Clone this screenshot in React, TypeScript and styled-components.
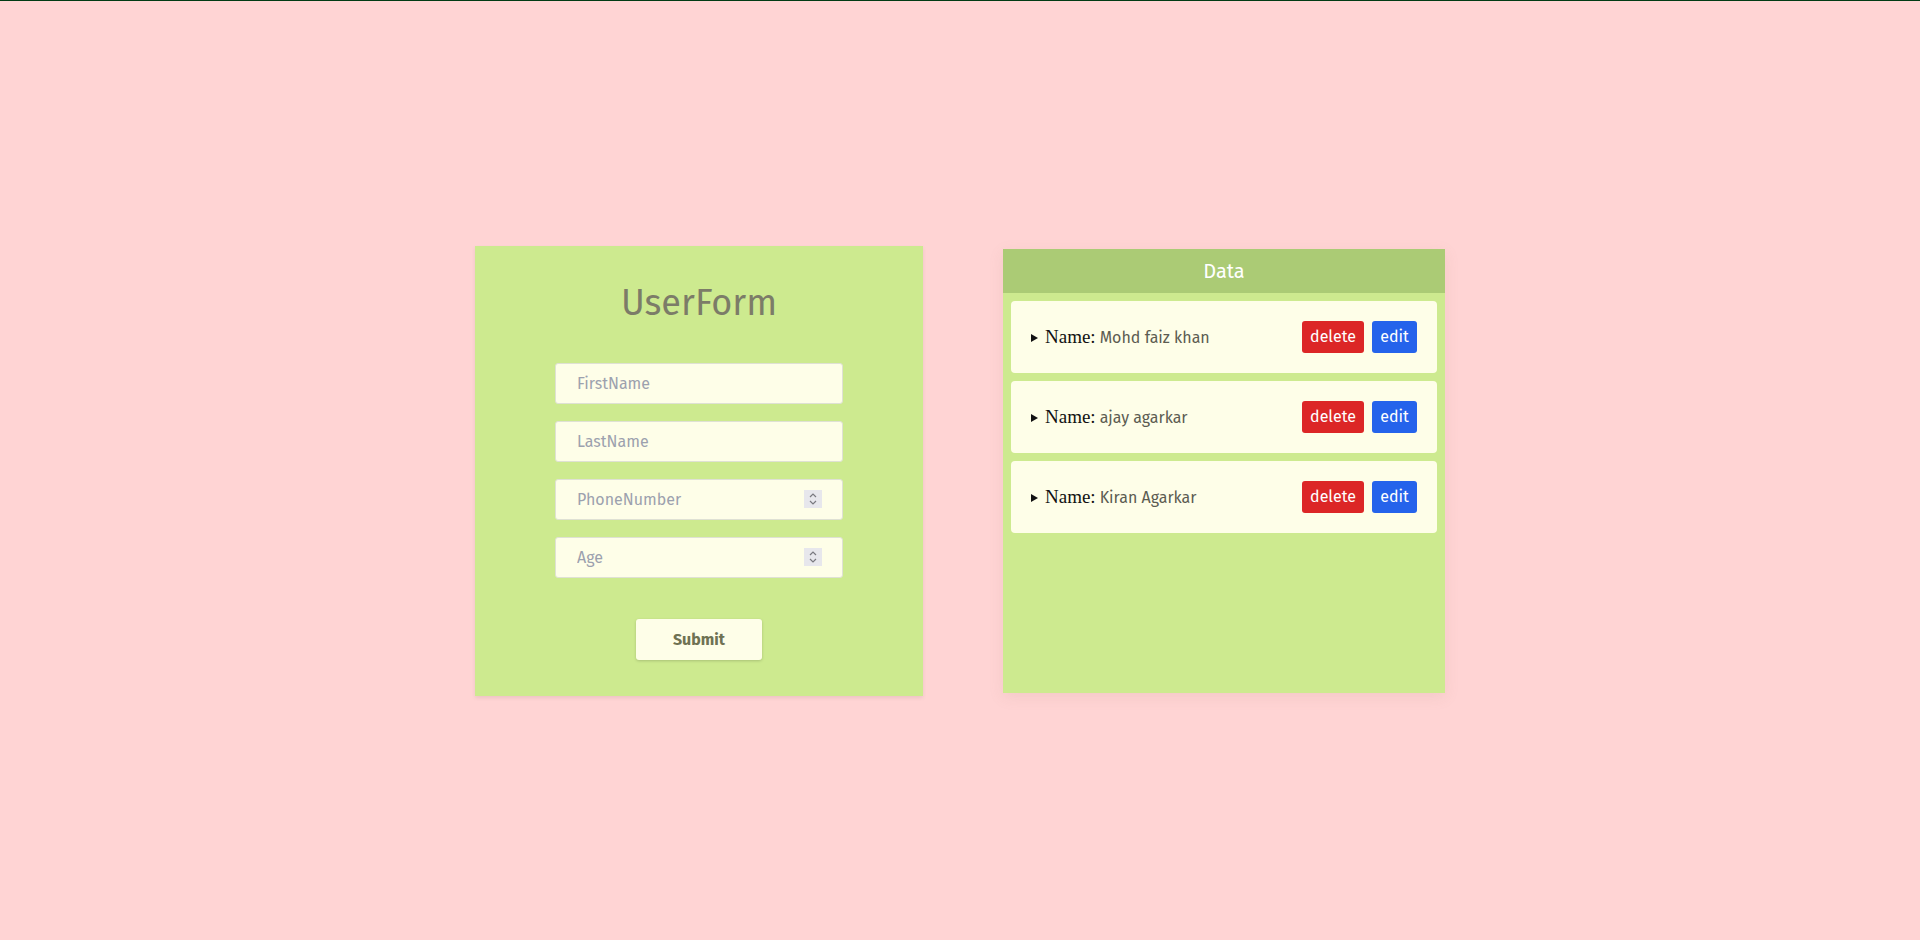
import React from "react";
import styled, { createGlobalStyle } from "styled-components";

const GlobalStyle = createGlobalStyle`
  * { box-sizing: border-box; }
  html, body { margin: 0; padding: 0; }
  body {
    background: #ffd4d4;
    border-top: 1px solid #013a14;
    font-family: "Fira Sans", Roboto, "Noto Sans", sans-serif;
  }
`;

const Page = styled.main`
  min-height: 939px;
  display: flex;
  align-items: center;
  justify-content: center;
  gap: 80px;
`;

const FormCard = styled.form`
  width: 448px;
  height: 450px;
  background: #cdea8f;
  box-shadow: 0 2px 4px rgba(0, 0, 0, 0.08);
  display: flex;
  flex-direction: column;
  align-items: center;
  padding-top: 35px;
`;

const Title = styled.h1`
  margin: 0 0 38px;
  font-size: 36px;
  line-height: 44px;
  font-weight: 400;
  color: #7c7c68;
`;

const Fields = styled.div`
  display: flex;
  flex-direction: column;
  gap: 17px;
  width: 288px;
`;

const FieldBox = styled.label`
  display: flex;
  align-items: center;
  height: 41px;
  padding: 0 20px 0 21px;
  background: #fefee8;
  border: 1px solid #dfe1d4;
  border-radius: 3px;
`;

const Input = styled.input`
  flex: 1;
  min-width: 0;
  border: none;
  outline: none;
  background: transparent;
  font-family: inherit;
  font-size: 16px;
  color: #444;
  padding: 0;
  &::placeholder { color: #9ca1ae; }
  &::-webkit-inner-spin-button,
  &::-webkit-outer-spin-button { -webkit-appearance: none; margin: 0; }
  -moz-appearance: textfield;
`;

const Spinner = styled.span`
  width: 18px;
  height: 18px;
  background: #e7e7ec;
  display: flex;
  align-items: center;
  justify-content: center;
`;

const SubmitButton = styled.button`
  margin-top: 41px;
  width: 126px;
  height: 41px;
  border: none;
  border-radius: 3px;
  background: #fefee8;
  box-shadow: 0 1px 3px rgba(0, 0, 0, 0.18);
  font-family: inherit;
  font-size: 16px;
  font-weight: 700;
  color: #6f7253;
  cursor: pointer;
`;

const DataCard = styled.section`
  width: 442px;
  height: 444px;
  background: #cdea8f;
  box-shadow: 0 4px 14px rgba(160, 120, 110, 0.12);
  display: flex;
  flex-direction: column;
`;

const DataHeader = styled.h2`
  margin: 0;
  height: 44px;
  background: #abcb75;
  color: #ffffff;
  font-size: 20px;
  font-weight: 400;
  line-height: 44px;
  text-align: center;
`;

const List = styled.div`
  display: flex;
  flex-direction: column;
  gap: 8px;
  padding: 8px;
`;

const Row = styled.div`
  height: 72px;
  background: #fefee8;
  border-radius: 4px;
  display: flex;
  align-items: center;
  justify-content: space-between;
  padding: 0 20px;
`;

const Details = styled.details`
  font-family: "Liberation Serif", "Times New Roman", serif;
  font-size: 19px;
  color: #111;
`;

const Summary = styled.summary`
  cursor: pointer;
  list-style: none;
  display: flex;
  align-items: baseline;
  &::-webkit-details-marker { display: none; }
  &::before {
    content: "";
    display: inline-block;
    width: 0;
    height: 0;
    border-top: 4px solid transparent;
    border-bottom: 4px solid transparent;
    border-left: 7px solid #111;
    margin: 0 7px 0 0;
    align-self: center;
    transform: translateY(1px);
  }
`;

const Label = styled.span`
  margin-right: 4px;
`;

const NameValue = styled.span`
  font-family: "Fira Sans", Roboto, "Noto Sans", sans-serif;
  font-size: 16px;
  color: #5c5c52;
`;

const Actions = styled.div`
  display: flex;
  gap: 8px;
`;

const ActionButton = styled.button<{ $variant: "delete" | "edit" }>`
  height: 32px;
  padding: 0 ${(p) => (p.$variant === "delete" ? "7px" : "8px")};
  min-width: ${(p) => (p.$variant === "delete" ? "62px" : "45px")};
  border: none;
  border-radius: 3px;
  background: ${(p) => (p.$variant === "delete" ? "#dc2626" : "#2563eb")};
  color: #ffffff;
  font-family: inherit;
  font-size: 16px;
  cursor: pointer;
`;

const SpinIcon = () => (
  <svg width="10" height="14" viewBox="0 0 10 14" fill="none" stroke="#7a7a80" strokeWidth="1.2">
    <path d="M2 5 L5 2 L8 5" />
    <path d="M2 9 L5 12 L8 9" />
  </svg>
);

const people = ["Mohd faiz khan", "ajay agarkar", "Kiran Agarkar"];

export default function App() {
  return (
    <>
      <GlobalStyle />
      <Page>
        <FormCard onSubmit={(e) => e.preventDefault()}>
          <Title>UserForm</Title>
          <Fields>
            <FieldBox>
              <Input type="text" placeholder="FirstName" />
            </FieldBox>
            <FieldBox>
              <Input type="text" placeholder="LastName" />
            </FieldBox>
            <FieldBox>
              <Input type="number" placeholder="PhoneNumber" />
              <Spinner><SpinIcon /></Spinner>
            </FieldBox>
            <FieldBox>
              <Input type="number" placeholder="Age" />
              <Spinner><SpinIcon /></Spinner>
            </FieldBox>
          </Fields>
          <SubmitButton type="submit">Submit</SubmitButton>
        </FormCard>
        <DataCard>
          <DataHeader>Data</DataHeader>
          <List>
            {people.map((name) => (
              <Row key={name}>
                <Details>
                  <Summary>
                    <Label>Name:</Label>
                    <NameValue>{name}</NameValue>
                  </Summary>
                </Details>
                <Actions>
                  <ActionButton $variant="delete">delete</ActionButton>
                  <ActionButton $variant="edit">edit</ActionButton>
                </Actions>
              </Row>
            ))}
          </List>
        </DataCard>
      </Page>
    </>
  );
}
